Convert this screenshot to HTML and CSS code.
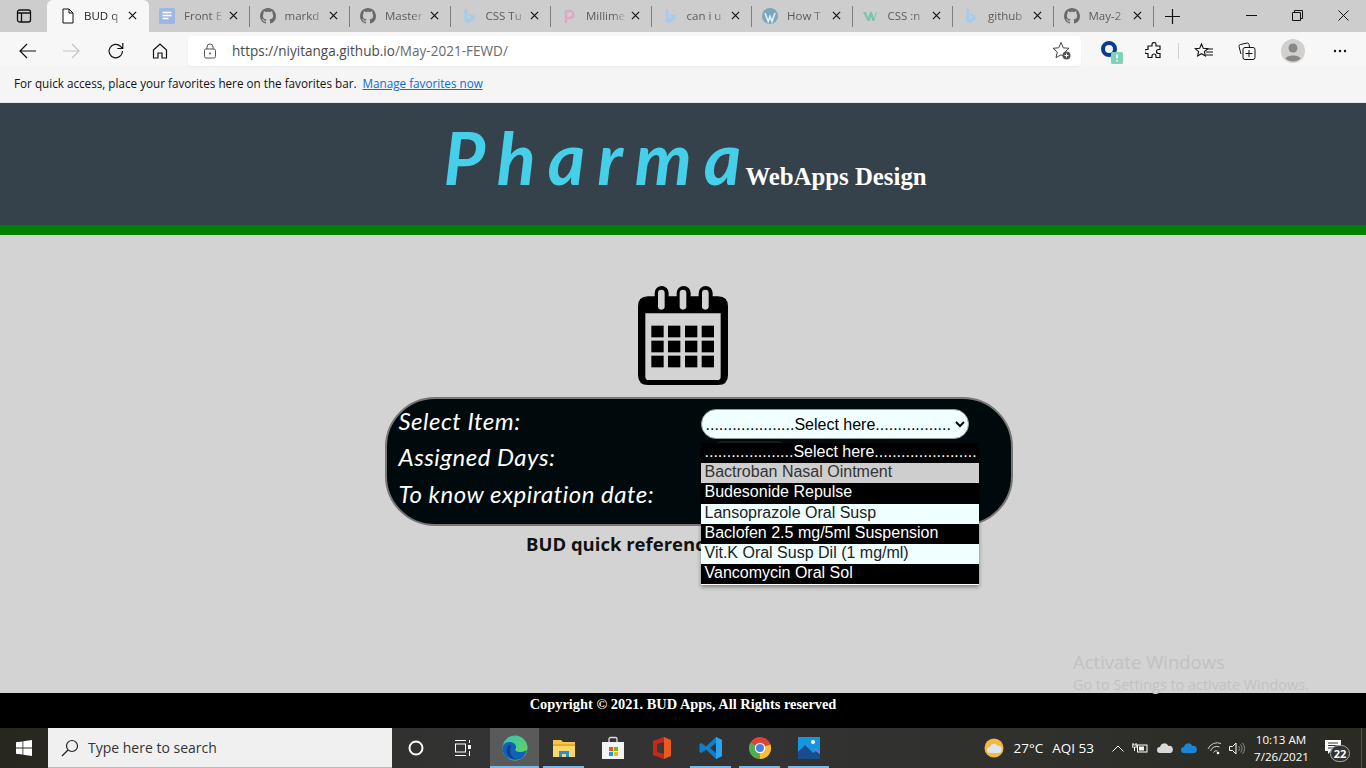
FILE: index.html
```html
<!DOCTYPE html>
<html>
  <head>
    <title>BUD quick reference</title>
    <link rel="stylesheet" href="styles.css">
  </head>
  <body>
    <svg class="defs" width="0" height="0">
      <symbol id="gh" viewBox="0 0 16 16"><path fill="#6b6b6b" d="M8 0C3.58 0 0 3.58 0 8c0 3.54 2.29 6.53 5.47 7.59.4.07.55-.17.55-.38 0-.19-.01-.82-.01-1.49-2.01.37-2.53-.49-2.69-.94-.09-.23-.48-.94-.82-1.13-.28-.15-.68-.52-.01-.53.63-.01 1.08.58 1.23.82.72 1.21 1.87.87 2.33.66.07-.52.28-.87.51-1.07-1.78-.2-3.64-.89-3.64-3.95 0-.87.31-1.59.82-2.15-.08-.2-.36-1.02.08-2.12 0 0 .67-.21 2.2.82.64-.18 1.32-.27 2-.27.68 0 1.36.09 2 .27 1.53-1.04 2.2-.82 2.2-.82.44 1.1.16 1.92.08 2.12.51.56.82 1.27.82 2.15 0 3.07-1.87 3.75-3.65 3.95.29.25.54.73.54 1.48 0 1.07-.01 1.93-.01 2.2 0 .21.15.46.55.38A8.013 8.013 0 0016 8c0-4.42-3.58-8-8-8z"/></symbol>
      <symbol id="bing" viewBox="0 0 16 16"><path fill="#a3cdee" d="M3.5 0.5 6.5 1.6V11l3.6-2.1-1.8-.9-1-2.6 6.2 2.1v3.4L6.500 15.500 3.500 13.800z"/></symbol>
      <symbol id="close" viewBox="0 0 10 10"><path d="M1 1l8 8M9 1l-8 8" stroke="#111" stroke-width="1.300" fill="none"/></symbol>
    </svg>

    <!-- browser tabs -->
    <div class="tabstrip">
      <div class="tabmenu">
        <svg width="16" height="16" viewBox="0 0 16 16"><rect x="1.500" y="2" width="13" height="12" rx="2" fill="none" stroke="#111" stroke-width="1.300"/><path d="M1.500 5h13M5.500 5v9" stroke="#111" stroke-width="1.300"/></svg>
      </div>
      <div class="tab tab-active">
        <svg class="fav" width="16" height="16" viewBox="0 0 16 16"><path d="M3 1h6l4 4v10H3z M9 1v4h4" fill="#fff" stroke="#111" stroke-width="1"/></svg>
        <span class="tab-title">BUD q</span>
        <svg class="x" width="9" height="9"><use href="#close"/></svg>
      </div>
      <div class="tab">
        <svg class="fav" width="16" height="16" viewBox="0 0 16 16"><rect y="0" width="16" height="16" rx="1.500" fill="#9db7e4"/><path d="M3.500 4.500h9M3.500 7.500h9M3.500 10.500h6" stroke="#fff" stroke-width="1.500"/></svg>
        <span class="tab-title">Front E</span>
        <svg class="x" width="9" height="9"><use href="#close"/></svg>
      </div>
      <div class="tab">
        <svg class="fav" width="16" height="16"><use href="#gh"/></svg>
        <span class="tab-title">markd</span>
        <svg class="x" width="9" height="9"><use href="#close"/></svg>
      </div>
      <div class="tab">
        <svg class="fav" width="16" height="16"><use href="#gh"/></svg>
        <span class="tab-title">Master</span>
        <svg class="x" width="9" height="9"><use href="#close"/></svg>
      </div>
      <div class="tab">
        <svg class="fav" width="16" height="16"><use href="#bing"/></svg>
        <span class="tab-title">CSS Tu</span>
        <svg class="x" width="9" height="9"><use href="#close"/></svg>
      </div>
      <div class="tab">
        <svg class="fav" width="16" height="16" viewBox="0 0 16 16"><path d="M5 15V3h4a3.500 3.500 0 010 7H6" fill="none" stroke="#e0a6c4" stroke-width="2.300"/><path d="M2 5l3-3" stroke="#a8d8c4" stroke-width="2"/></svg>
        <span class="tab-title">Millime</span>
        <svg class="x" width="9" height="9"><use href="#close"/></svg>
      </div>
      <div class="tab">
        <svg class="fav" width="16" height="16"><use href="#bing"/></svg>
        <span class="tab-title">can i u</span>
        <svg class="x" width="9" height="9"><use href="#close"/></svg>
      </div>
      <div class="tab">
        <svg class="fav" width="16" height="16" viewBox="0 0 16 16"><circle cx="8" cy="8" r="8" fill="#7aa7bd"/><path d="M3 5l3.200 8.500L8 8.500l2 5L13 5" fill="none" stroke="#e8f0f4" stroke-width="1.600"/></svg>
        <span class="tab-title">How T</span>
        <svg class="x" width="9" height="9"><use href="#close"/></svg>
      </div>
      <div class="tab">
        <svg class="fav" width="16" height="16" viewBox="0 0 16 16"><path d="M0 4h3l2 6 2-6h2l2 6 2-6h1l-3 9H9.500L8 8.500 6.500 13H4.500z" fill="#7cc4a8"/></svg>
        <span class="tab-title">CSS :n</span>
        <svg class="x" width="9" height="9"><use href="#close"/></svg>
      </div>
      <div class="tab">
        <svg class="fav" width="16" height="16"><use href="#bing"/></svg>
        <span class="tab-title">github</span>
        <svg class="x" width="9" height="9"><use href="#close"/></svg>
      </div>
      <div class="tab">
        <svg class="fav" width="16" height="16"><use href="#gh"/></svg>
        <span class="tab-title">May-2</span>
        <svg class="x" width="9" height="9"><use href="#close"/></svg>
      </div>
      <div class="tabplus">
        <svg width="15" height="15" viewBox="0 0 15 15"><path d="M7.500 0v15M0 7.500h15" stroke="#111" stroke-width="1.200"/></svg>
      </div>
      <div class="winbtns">
        <svg width="11" height="11" viewBox="0 0 11 11"><path d="M0 5.500h11" stroke="#111"/></svg>
        <svg width="11" height="11" viewBox="0 0 11 11"><path d="M.5 2.500h8v8h-8zM2.500 2.500V.5h8v8h-2" fill="none" stroke="#111"/></svg>
        <svg width="11" height="11" viewBox="0 0 11 11"><path d="M.5.500l10 10M10.500.500l-10 10" stroke="#111"/></svg>
      </div>
    </div>

    <!-- address bar -->
    <div class="toolbar">
      <svg class="nav nav-back" width="18" height="16" viewBox="0 0 18 16"><path d="M17 8H1M8 1L1 8l7 7" fill="none" stroke="#111" stroke-width="1.200"/></svg>
      <svg class="nav nav-fwd" width="18" height="16" viewBox="0 0 18 16"><path d="M1 8h16M10 1l7 7-7 7" fill="none" stroke="#c4c4c4" stroke-width="1.200"/></svg>
      <svg class="nav nav-reload" width="18" height="18" viewBox="0 0 18 18"><path d="M15.500 9a6.700 6.700 0 11-2-4.700L15.500 6.500M15.800 1v5.500h-5.500" fill="none" stroke="#111" stroke-width="1.200"/></svg>
      <svg class="nav nav-home" width="18" height="18" viewBox="0 0 18 18"><path d="M2.500 8L9 2l6.500 6v8h-4.500v-5H7v5H2.500z" fill="none" stroke="#111" stroke-width="1.200"/></svg>
      <div class="addr">
        <svg width="14" height="16" viewBox="0 0 14 16"><path d="M4 6V4a3 3 0 016 0v2" fill="none" stroke="#555"/><rect x="1.500" y="6" width="11" height="9" rx="1.500" fill="none" stroke="#555"/><circle cx="7" cy="10.500" r="1" fill="#555"/></svg>
        <span class="url"><span class="url-host">https://niyitanga.github.io</span>/May-2021-FEWD/</span>
        <svg class="addr-star" width="20" height="20" viewBox="0 0 20 20"><path d="M9 1.500l2.300 5.300 5.700.5-4.300 3.800 1.300 5.600L9 13.800l-5 2.900 1.300-5.600L1 7.300l5.700-.5z" fill="none" stroke="#444"/><circle cx="14.500" cy="14.500" r="4" fill="#555"/><path d="M12.500 14.500h4M14.500 12.500v4" stroke="#fff"/></svg>
      </div>
      <svg class="tool tool-ext1" width="24" height="26" viewBox="0 0 24 26"><circle cx="9" cy="9" r="6" fill="none" stroke="#0b3a8c" stroke-width="4"/><rect x="11" y="12" width="12" height="12" rx="1.500" fill="#7fd1b9"/><path d="M17 14.500v4M17 20v1.500" stroke="#fff" stroke-width="1.500"/></svg>
      <svg class="tool tool-puzzle" width="18" height="18" viewBox="0 0 18 18"><path d="M7 2.500a2 2 0 014 0V4h4v3.500h-1.500a2 2 0 000 4H15V15.500h-4V14a2 2 0 00-4 0v1.500H3V11.500H1.500a2 2 0 010-4H3V4h4z" fill="none" stroke="#111" stroke-width="1.200"/></svg>
      <span class="tool-sep"></span>
      <svg class="tool tool-favs" width="20" height="18" viewBox="0 0 20 18"><path d="M7.500 2l1.800 4.200 4.500.4-3.400 3 1 4.400-3.900-2.300L3.600 14l1-4.400-3.400-3 4.500-.4z" fill="none" stroke="#111" stroke-width="1.100"/><path d="M12 7h7M12 10h7M12 13h7" stroke="#111"/></svg>
      <svg class="tool tool-coll" width="18" height="18" viewBox="0 0 18 18"><path d="M3 12L1 4.500Q.800 3 2.300 2.500l7-1.500q1.400 0 1.700 1.300L11.500 5" fill="none" stroke="#111"/><rect x="5" y="5.500" width="12" height="12" rx="2" fill="#f7f7f7" stroke="#111"/><path d="M11 8v7M7.500 11.500h7" stroke="#111"/></svg>
      <svg class="tool tool-user" width="24" height="24" viewBox="0 0 24 24"><circle cx="12" cy="12" r="12" fill="#d2d0ce"/><circle cx="12" cy="9" r="4.500" fill="#8a8886"/><path d="M4.500 19.500C6 15.500 18 15.500 19.500 19.500 16 23.500 8 23.500 4.500 19.500z" fill="#8a8886"/></svg>
      <svg class="tool tool-more" width="14" height="4" viewBox="0 0 14 4"><circle cx="2" cy="2" r="1.200" fill="#111"/><circle cx="7" cy="2" r="1.200" fill="#111"/><circle cx="12" cy="2" r="1.200" fill="#111"/></svg>
    </div>

    <div class="favbar">
      <span>For quick access, place your favorites here on the favorites bar.</span>
      <a class="favlink" href="#">Manage favorites now</a>
    </div>

    <!-- page -->
    <header class="site-head">
      <span class="logo">Pharma</span>
      <span class="logo-sub">WebApps Design</span>
    </header>

    <main class="site-main">
      <svg class="cal" width="90" height="100" viewBox="55 28 270 300">
        <path fill-rule="evenodd" d="M85 62h20V52a21 21 0 0142 0v10h24V52a21 21 0 0142 0v10h24V52a21 21 0 0142 0v10h16q30 0 30 30v206q0 30-30 30H85q-30 0-30-30V92q0-30 30-30zM77 113v190q0 10 10 10h206q10 0 10-10V113z"/>
        <rect x="115" y="42" width="20" height="60" rx="10" fill="#d3d3d3"/>
        <rect x="180" y="42" width="20" height="60" rx="10" fill="#d3d3d3"/>
        <rect x="247" y="42" width="20" height="60" rx="10" fill="#d3d3d3"/>
        <g>
          <rect x="95" y="150" width="37" height="35"/><rect x="145" y="150" width="37" height="35"/><rect x="196" y="150" width="37" height="35"/><rect x="246" y="150" width="37" height="35"/>
          <rect x="95" y="195" width="37" height="35"/><rect x="145" y="195" width="37" height="35"/><rect x="196" y="195" width="37" height="35"/><rect x="246" y="195" width="37" height="35"/>
          <rect x="95" y="240" width="37" height="35"/><rect x="145" y="240" width="37" height="35"/><rect x="196" y="240" width="37" height="35"/><rect x="246" y="240" width="37" height="35"/>
        </g>
      </svg>

      <form class="bud-form">
        <label class="bud-label" for="item">Select Item:</label>
        <div class="bud-field">
          <select id="item" class="bud-select">
            <option>....................Select here.................</option>
          </select>
          <!-- open dropdown list -->
          <ul class="bud-list">
            <li class="opt-dark">....................Select here.......................</li>
            <li class="opt-gray">Bactroban Nasal Ointment</li>
            <li class="opt-dark">Budesonide Repulse</li>
            <li class="opt-light">Lansoprazole Oral Susp</li>
            <li class="opt-dark">Baclofen 2.5 mg/5ml Suspension</li>
            <li class="opt-light">Vit.K Oral Susp Dil (1 mg/ml)</li>
            <li class="opt-dark">Vancomycin Oral Sol</li>
          </ul>
        </div>
        <label class="bud-label">Assigned Days:</label>
        <div class="bud-days"></div>
        <label class="bud-label">To know expiration date:</label>
      </form>

      <p class="bud-note">BUD quick reference</p>
      <div class="activate">
        <div class="activate-big">Activate Windows</div>
        <div class="activate-small">Go to Settings to activate Windows.</div>
      </div>
    </main>

    <footer class="site-foot">Copyright © 2021. BUD Apps, All Rights reserved</footer>

    <!-- windows taskbar -->
    <div class="taskbar">
      <div class="start">
        <svg width="16" height="16" viewBox="0 0 16 16"><path fill="#fff" d="M0 2.300l6.500-.9v6.200H0zM7.300 1.300L16 0v7.600H7.300zM0 8.400h6.500v6.200L0 13.700zM7.300 8.400H16V16l-8.700-1.200z"/></svg>
      </div>
      <div class="search">
        <svg width="18" height="18" viewBox="0 0 18 18"><circle cx="11" cy="7" r="5.500" fill="none" stroke="#222" stroke-width="1.200"/><path d="M7 11l-6 6" stroke="#222" stroke-width="1.200"/></svg>
        <span>Type here to search</span>
      </div>
      <div class="tb-app tb-cortana">
        <svg width="16" height="16" viewBox="0 0 16 16"><circle cx="8" cy="8" r="6.500" fill="none" stroke="#fff" stroke-width="2"/></svg>
      </div>
      <div class="tb-app tb-view">
        <svg width="18" height="16" viewBox="0 0 18 16"><path d="M1 0.500h11M1 15.500h11" stroke="#fff"/><rect x="1.500" y="4" width="10" height="8" fill="none" stroke="#fff"/><rect x="14" y="5" width="3" height="4" fill="#fff"/><path d="M15.500 0v3M15.500 11v5" stroke="#fff"/></svg>
      </div>
      <div class="tb-app tb-active tb-open">
        <svg width="26" height="26" viewBox="0 0 26 26"><defs><linearGradient id="edge" x1="0" y1="0" x2="1" y2="1"><stop offset="0" stop-color="#36c0b8"/><stop offset="1" stop-color="#6ad84e"/></linearGradient></defs><circle cx="13" cy="13" r="12.500" fill="url(#edge)"/><path d="M25 15c-1 5-5 10-12 10C6 25 .500 20 .500 13c0-3 3-6 7-6 5 0 8 4 6 7-1 1.500 1 3 4 3 3 0 5-.5 7.500-2z" fill="#0f62b8"/><path d="M8 10c-3 1-4 4-3 8 1 3 4 6 8 6-3-2-5-5-5-8s2-5 0-6z" fill="#0a3f8c"/></svg>
      </div>
      <div class="tb-app tb-open">
        <svg width="22" height="20" viewBox="0 0 22 20"><path d="M0 2h8l2 2h12v15H0z" fill="#f6c545"/><rect y="6" width="22" height="2" fill="#e9a92e"/><rect x="0" y="8" width="22" height="11" fill="#fad76b"/><path d="M6 19v-6h10v6h-3v-3H9v3z" fill="#2b8fd8"/></svg>
      </div>
      <div class="tb-app">
        <svg width="24" height="24" viewBox="0 0 24 24"><path d="M8 6V3a1.500 1.500 0 011.500-1.500h5A1.500 1.500 0 0116 3v3" fill="none" stroke="#ddd" stroke-width="1.300"/><rect x="1" y="6" width="22" height="17" fill="#f4f4f4"/><rect x="8" y="11" width="4" height="4" fill="#f25022"/><rect x="13" y="11" width="4" height="4" fill="#7fba00"/><rect x="8" y="16" width="4" height="4" fill="#00a4ef"/><rect x="13" y="16" width="4" height="4" fill="#ffb900"/></svg>
      </div>
      <div class="tb-app">
        <svg width="20" height="24" viewBox="0 0 20 24"><path d="M1 5L12 1v22L1 19z" fill="#c8281c"/><path d="M12 1l7 3v16l-7 3z" fill="#eb5a1c"/><path d="M5 8l7-2v12l-7-2z" fill="#3a3a3a"/></svg>
      </div>
      <div class="tb-app tb-open">
        <svg width="24" height="24" viewBox="0 0 24 24"><path d="M17 1l6 3v16l-6 3L7 13.500 2.500 17 .5 16v-8l2-1L7 10.500z" fill="#0f7fcc"/><path d="M17 1l6 3v16l-6 3z" fill="#27a5ef"/><path d="M17 7l-6 5 6 5z" fill="#333"/></svg>
      </div>
      <div class="tb-app tb-open">
        <svg width="24" height="24" viewBox="0 0 24 24"><circle cx="12" cy="12" r="11" fill="#db4437"/><path d="M12 12L22.500 8.500A11 11 0 0112 23z" fill="#fbc02d"/><path d="M12 12L12 23A11 11 0 012.500 6.500z" fill="#4caf50"/><circle cx="12" cy="12" r="5.200" fill="#fff"/><circle cx="12" cy="12" r="4" fill="#4a7fe8"/></svg>
      </div>
      <div class="tb-app tb-open">
        <svg width="22" height="22" viewBox="0 0 22 22"><rect width="22" height="22" fill="#1497e0"/><path d="M0 22V15l7-7 8 8 3-2 4 3v5z" fill="#1b4a8f"/><path d="M13 14l2-2 7 5v-3l-5-3-3 2z" fill="#5a82d8"/><circle cx="15" cy="5" r="2" fill="#fff"/></svg>
      </div>

      <div class="tray">
        <svg class="tr-weather" width="20" height="20" viewBox="0 0 20 20"><circle cx="10" cy="10" r="9.500" fill="#f5b93f"/><path d="M6 15a3 3 0 010-6 4 4 0 017.500-1A3.500 3.500 0 0115 15z" fill="#dbe6ee"/></svg>
        <span class="tr-temp">27°C</span>
        <span class="tr-aqi">AQI 53</span>
        <svg class="tr-caret" width="12" height="7" viewBox="0 0 12 7"><path d="M.5 6.500L6 1l5.500 5.500" fill="none" stroke="#fff"/></svg>
        <svg class="tr-batt" width="16" height="12" viewBox="0 0 16 12"><rect x="5.500" y="3" width="9.500" height="7" fill="none" stroke="#fff"/><rect x="7" y="4.500" width="5" height="4" fill="#fff"/><path d="M1 1v2M4 1v2M0 3h5v2H0zM2.500 5v4" stroke="#fff"/></svg>
        <svg class="tr-cloud" width="16" height="10" viewBox="0 0 16 10"><path d="M3 10a3 3 0 010-6 4.500 4.500 0 018.500-1A3.500 3.500 0 0113 10z" fill="#d8d8d8"/></svg>
        <svg class="tr-cloud2" width="16" height="10" viewBox="0 0 16 10"><path d="M3 10a3 3 0 010-6 4.500 4.500 0 018.500-1A3.500 3.500 0 0113 10z" fill="#1a86d8"/></svg>
        <svg class="tr-wifi" width="15" height="13" viewBox="0 0 15 13"><path d="M1 7a10 10 0 0113-5.500M3.500 9a6.500 6.500 0 019-4M6.500 10.500a3 3 0 014-1.500" fill="none" stroke="#ccc"/><circle cx="11" cy="11" r="1.300" fill="#fff"/></svg>
        <svg class="tr-vol" width="16" height="13" viewBox="0 0 16 13"><path d="M.5 4.500h3l3.500-3.500v11l-3.500-3.500h-3z" fill="none" stroke="#fff"/><path d="M9.500 4a3.500 3.500 0 010 5M11.500 2.500a6 6 0 010 8M13.500 1a8.500 8.500 0 010 11" fill="none" stroke="#888"/></svg>
        <div class="tr-clock"><div>10:13 AM</div><div>7/26/2021</div></div>
        <div class="tr-notif">
          <svg width="16" height="14" viewBox="0 0 16 14"><path d="M0 0h16v11H6l-3 3v-3H0z" fill="#fff"/><path d="M3 3h10M3 5.500h10M3 8h7" stroke="#333"/></svg>
          <span class="tr-badge">22</span>
        </div>
      </div>
    </div>
  </body>
</html>
```

FILE: styles.css
```css
/* Whole window */
body {
  margin: 0;
  height: 768px;
  overflow: hidden;
  display: flex;
  flex-direction: column;
  font-family: "Open Sans", "Noto Sans", sans-serif;
  background-color: #d3d3d3;
}

.defs {
  display: none;
}

/* Tab strip */
.tabstrip {
  display: flex;
  height: 32px;
  background-color: #cdcdcd;
  flex: none;
}

.tabmenu {
  width: 47px;
  display: flex;
  align-items: center;
  justify-content: center;
}

.tab {
  position: relative;
  width: 100.5px;
  box-sizing: border-box;
  display: flex;
  align-items: center;
  padding: 0 12px 1px 10px;
  flex: none;
}

.tab::after {
  content: "";
  position: absolute;
  right: 0;
  top: 6px;
  bottom: 5px;
  width: 1px;
  background-color: #7d7d7d;
}

.tab-active {
  width: 102px;
  background-color: #f7f7f7;
  border-radius: 6px 6px 0 0;
  padding-left: 13px;
  padding-right: 12px;
}

.tab-active::after {
  display: none;
}

.fav {
  flex: none;
}

.tab-title {
  flex: 1;
  margin-left: 9px;
  margin-right: 3px;
  overflow: hidden;
  white-space: nowrap;
  font-size: 11.5px;
  color: #5c5c5c;
  -webkit-mask-image: linear-gradient(to right, #000 65%, transparent);
  mask-image: linear-gradient(to right, #000 65%, transparent);
}

.tab-active .tab-title {
  color: #222;
  margin-left: 8px;
}

.x {
  flex: none;
}

.tabplus {
  width: 36px;
  display: flex;
  align-items: center;
  justify-content: center;
}

.winbtns {
  margin-left: auto;
  display: flex;
  align-items: center;
  gap: 35px;
  padding: 0 17px 2px 0;
}

/* Address bar row */
.toolbar {
  position: relative;
  height: 34px;
  box-sizing: border-box;
  padding-top: 4px;
  background-color: #f7f7f7;
  display: flex;
  align-items: center;
  flex: none;
}

.nav,
.tool {
  flex: none;
}

.nav-back {
  margin-left: 19px;
}

.nav-fwd {
  margin-left: 25px;
}

.nav-reload {
  margin-left: 27px;
}

.nav-home {
  margin-left: 26px;
}

.addr {
  margin-left: 19px;
  width: 893px;
  height: 30px;
  background-color: #fff;
  border-radius: 4px;
  box-shadow: 0 1px 2px rgba(0, 0, 0, 0.06);
  display: flex;
  align-items: center;
  padding-left: 15px;
  box-sizing: border-box;
}

.url {
  margin-left: 15px;
  font-size: 13.55px;
  color: #6a6a6a;
}

.url-host {
  color: #4a4a4a;
}

.addr-star {
  margin-left: auto;
  margin-right: 9px;
}

.tool-ext1 {
  margin-left: 19px;
  margin-top: 4px;
}

.tool-puzzle {
  margin-left: 21px;
}

.tool-sep {
  width: 1px;
  height: 16px;
  background-color: #d0d0d0;
  margin-left: 15px;
}

.tool-favs {
  margin-left: 15px;
}

.tool-coll {
  margin-left: 24px;
}

.tool-user {
  margin-left: 25px;
}

.tool-more {
  margin-left: 28px;
}

/* Favorites bar */
.favbar {
  height: 37px;
  box-sizing: border-box;
  background-color: #f5f5f5;
  border-bottom: 1px solid #e6e6e6;
  padding: 0 0 3px 14px;
  display: flex;
  align-items: center;
  font-size: 11.7px;
  color: #111;
  flex: none;
}

.favlink {
  margin-left: 6px;
  color: #0a6cd6;
}

/* Site header */
.site-head {
  height: 122px;
  box-sizing: border-box;
  background-color: #36424b;
  display: flex;
  justify-content: center;
  align-items: baseline;
  padding: 9px 0 0 4px;
  flex: none;
}

.logo {
  font-family: "Lato", sans-serif;
  font-style: italic;
  font-weight: bold;
  font-size: 72px;
  line-height: 90px;
  letter-spacing: 12px;
  color: #45cfe8;
}

.logo-sub {
  margin-left: -8px;
  font-family: "Liberation Serif", serif;
  font-weight: bold;
  font-size: 24.8px;
  color: #fff;
}

/* Main content */
.site-main {
  position: relative;
  flex: 1;
  border-top: 10px solid #008000;
  background-color: #d3d3d3;
  display: flex;
  flex-direction: column;
  align-items: center;
  padding-top: 50px;
}

.cal {
  flex: none;
}

.bud-form {
  margin: 12px 0 0 31px;
  width: 628px;
  height: 129px;
  box-sizing: border-box;
  background-color: #000a0c;
  border: 2px solid #777;
  border-radius: 50px;
  display: grid;
  grid-template-columns: 302px 268px;
  grid-template-rows: 34px 37px 40px;
  padding: 10px 0 0 12px;
}

.bud-label {
  margin-top: -1px;
  font-family: "Lato", sans-serif;
  font-style: italic;
  font-size: 24px;
  line-height: 29px;
  letter-spacing: 0.5px;
  color: #fff;
  white-space: nowrap;
}

.bud-label:first-child {
  margin-top: -3px;
}

.bud-field {
  position: relative;
}

.bud-select {
  display: block;
  width: 268px;
  height: 30px;
  font-family: "Liberation Sans", sans-serif;
  font-size: 16px;
  background-color: #f0ffff;
  color: #000;
  border: 1px solid #999;
  border-radius: 15px;
}

.bud-days {
  width: 78px;
  height: 26px;
  margin-left: 10px;
  margin-top: -2px;
  background-color: #1c1c1c;
  border-radius: 12px;
}

/* Open select list, drawn over the form */
.bud-list {
  position: absolute;
  left: 0;
  top: 34px;
  z-index: 2;
  width: 278px;
  margin: 0;
  padding: 0;
  list-style: none;
  font-family: "Liberation Sans", sans-serif;
  font-size: 16px;
  box-shadow: 0 2px 4px rgba(0, 0, 0, 0.4);
  border-bottom: 1px solid #fff;
}

.bud-list li {
  height: 20.2px;
  line-height: 18px;
  padding-left: 4px;
  white-space: nowrap;
  overflow: hidden;
}

.opt-dark {
  background-color: #000;
  color: #fff;
}

.opt-gray {
  background-color: #cecece;
  color: #333;
}

.opt-light {
  background-color: #f0ffff;
  color: #222;
}

.bud-note {
  margin: 5px 0 0;
  width: 314px;
  font-family: "Open Sans", sans-serif;
  font-weight: bold;
  font-size: 18.5px;
  line-height: 26px;
  color: #111;
  white-space: nowrap;
}

/* Windows watermark */
.activate {
  position: absolute;
  left: 1073px;
  top: 415px;
  color: #c2c2c2;
}

.activate-big {
  font-size: 18.5px;
  line-height: 24px;
}

.activate-small {
  font-size: 14.4px;
  line-height: 22px;
  white-space: nowrap;
}

/* Site footer */
.site-foot {
  height: 35px;
  box-sizing: border-box;
  background-color: #000;
  color: #fff;
  font-family: "Liberation Serif", serif;
  font-weight: bold;
  font-size: 14.4px;
  text-align: center;
  padding-top: 3px;
  flex: none;
}

/* Taskbar */
.taskbar {
  height: 40px;
  display: flex;
  align-items: stretch;
  background: linear-gradient(to right, #27271f, #333 35%, #333 55%, #2b2b24);
  flex: none;
}

.start {
  width: 48px;
  display: flex;
  align-items: center;
  justify-content: center;
}

.search {
  width: 344px;
  box-sizing: border-box;
  background-color: #f0f0f0;
  border-bottom: 1px solid #bbb;
  display: flex;
  align-items: center;
  padding-left: 13px;
  font-size: 14px;
  color: #333;
}

.search span {
  margin-left: 9px;
}

.tb-app {
  position: relative;
  width: 49px;
  display: flex;
  align-items: center;
  justify-content: center;
  flex: none;
}

.tb-cortana {
  width: 48px;
}

.tb-view {
  width: 46px;
  margin-right: 4px;
}

.tb-active {
  background-color: #5a5a5a;
}

.tb-open::after {
  content: "";
  position: absolute;
  left: 4px;
  right: 4px;
  bottom: 0;
  height: 2px;
  background-color: #76b9ed;
}

.tb-active::after {
  left: 0;
  right: 0;
}

.tray {
  margin: 0 4px 0 auto;
  display: flex;
  align-items: center;
  color: #fff;
  font-size: 13.5px;
  padding-right: 11px;
  border-right: 1px solid #555;
}

.tr-temp {
  margin-left: 10px;
}

.tr-aqi {
  margin-left: 9px;
}

.tr-caret {
  margin-left: 18px;
}

.tr-batt {
  margin-left: 8px;
}

.tr-cloud {
  margin-left: 9px;
}

.tr-cloud2 {
  margin-left: 8px;
}

.tr-wifi {
  margin-left: 10px;
}

.tr-vol {
  margin-left: 7px;
}

.tr-clock {
  margin-left: 9px;
  width: 54px;
  font-size: 11.6px;
  line-height: 17px;
  text-align: center;
  white-space: nowrap;
}

.tr-notif {
  position: relative;
  width: 34px;
  height: 40px;
  margin-left: 8px;
  box-sizing: border-box;
  padding: 12px 0 0 9px;
}

.tr-badge {
  position: absolute;
  left: 14px;
  top: 17px;
  width: 18px;
  height: 15px;
  border: 1px solid #aaa;
  border-radius: 9px;
  background-color: #333;
  font-size: 11px;
  line-height: 15px;
  text-align: center;
  font-weight: bold;
}
```
